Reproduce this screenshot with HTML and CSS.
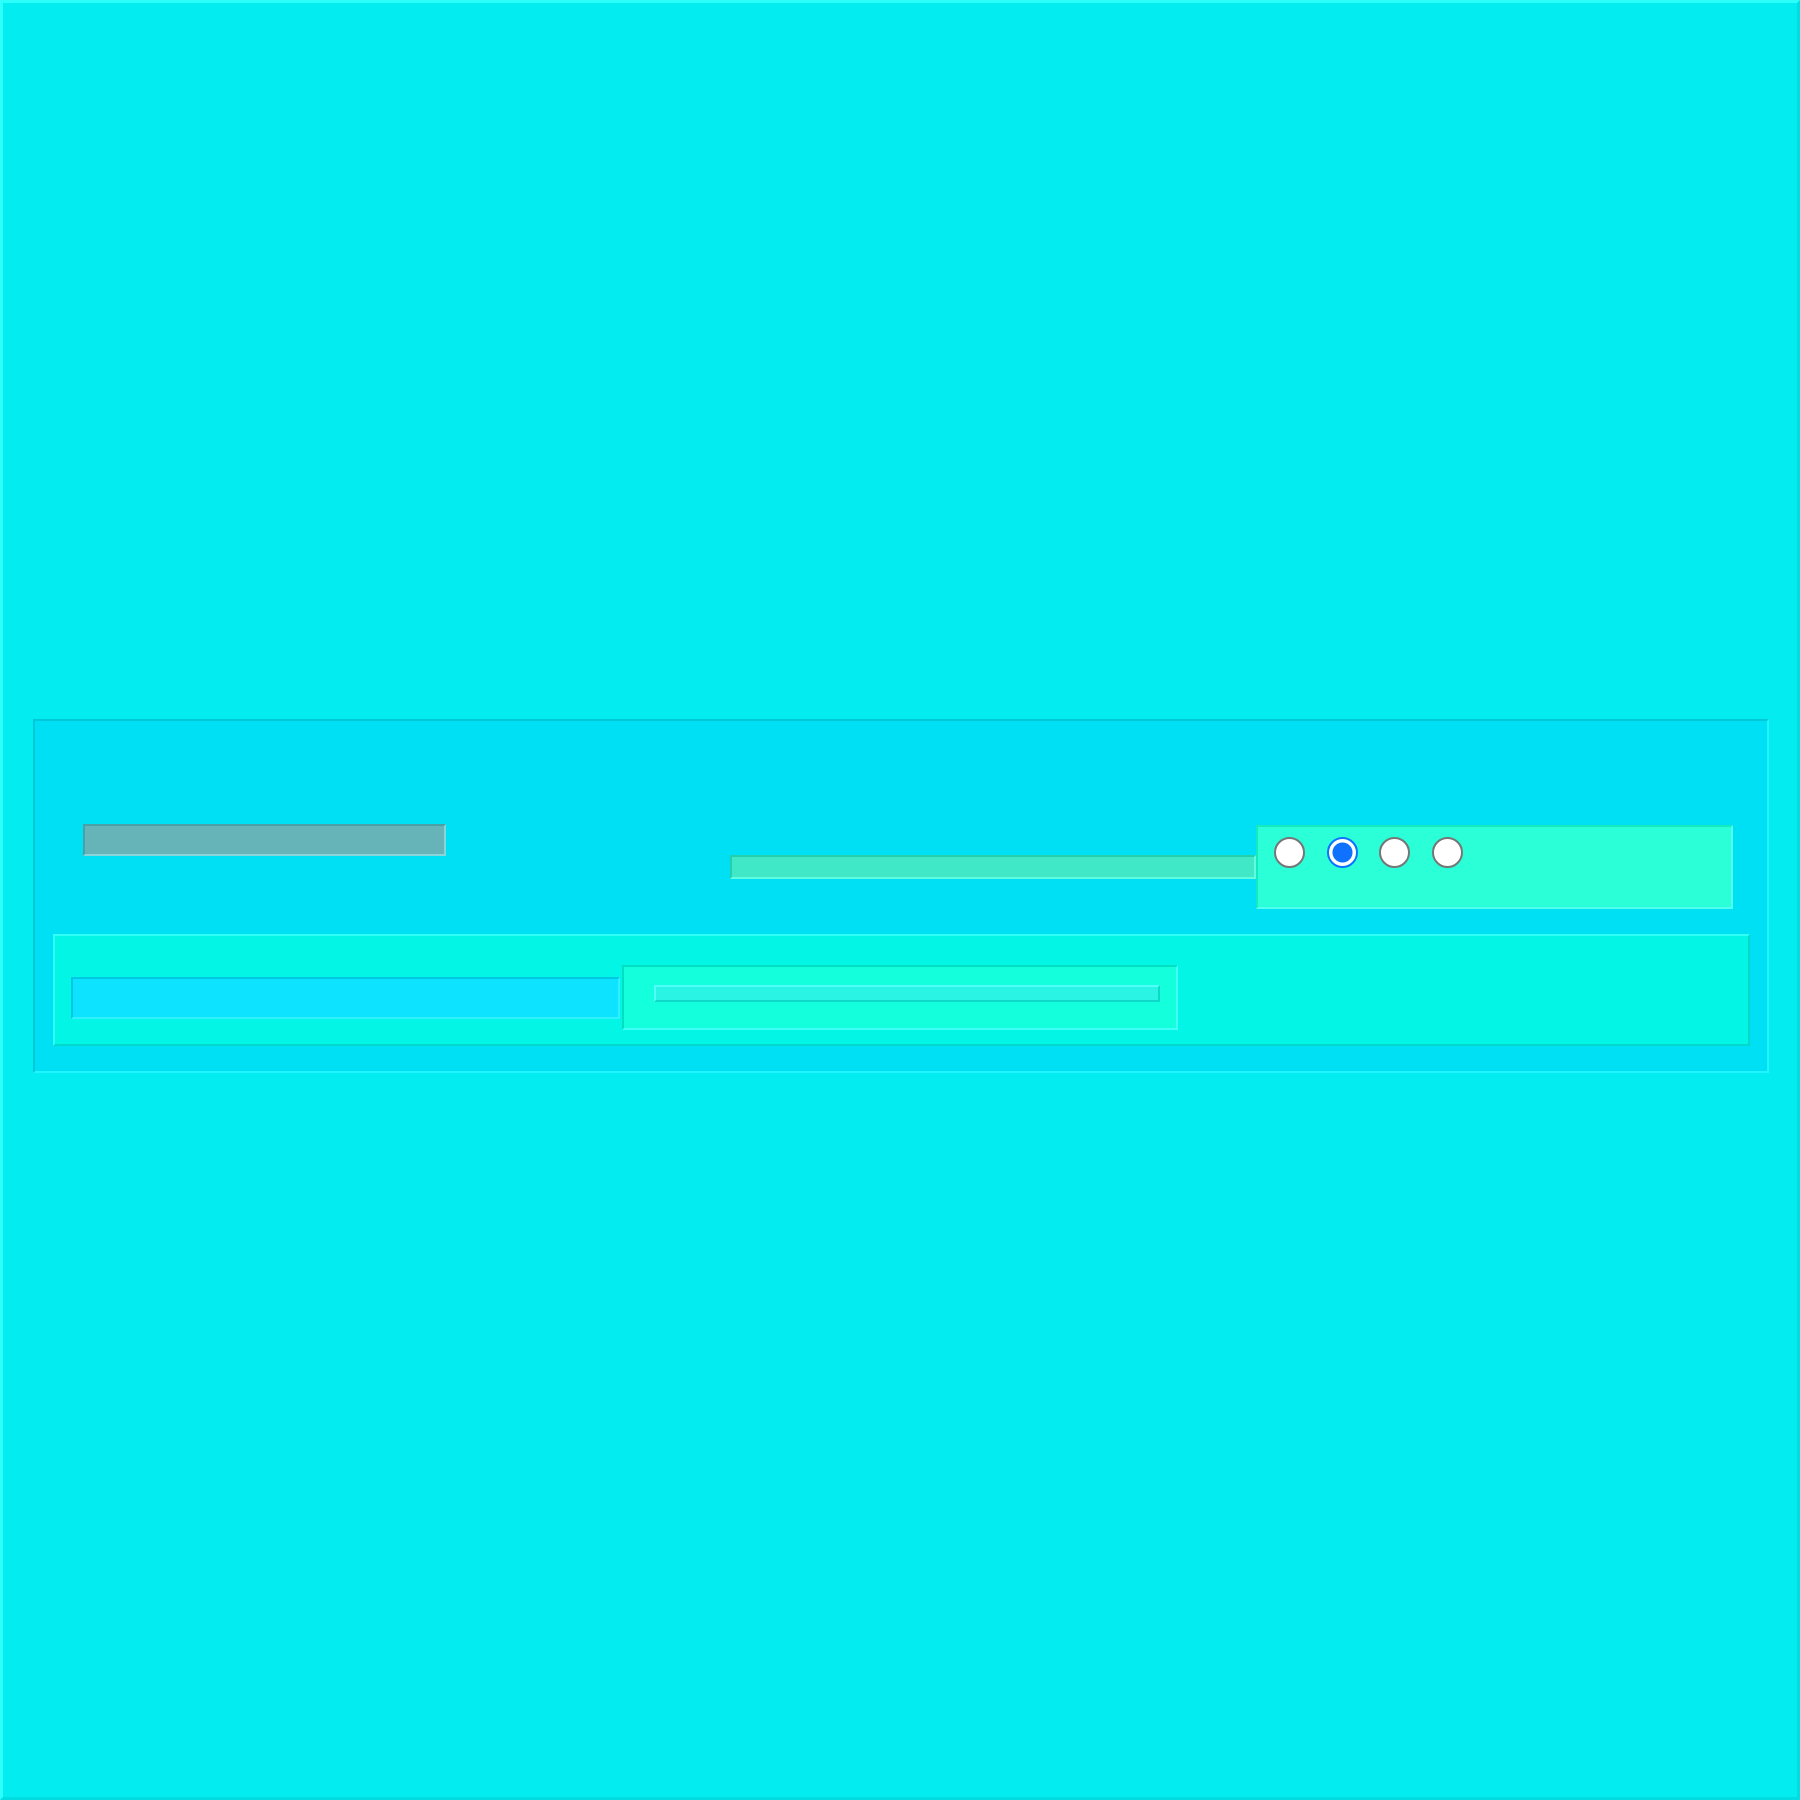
FILE: index.html
```html
<!DOCTYPE html>
<html>
<head>
<meta charset="utf-8">
<title>Panel</title>
<link rel="stylesheet" href="styles.css">
</head>
<body>
<div class="page">
  <div class="panel">
    <div class="top-row">
      <div class="gray-field"></div>
      <div class="right-group">
        <div class="green-bar"></div>
        <div class="radio-box">
          <input class="radio" type="radio" name="r">
          <input class="radio" type="radio" name="r" checked>
          <input class="radio" type="radio" name="r">
          <input class="radio" type="radio" name="r">
        </div>
      </div>
    </div>
    <div class="bottom-row">
      <div class="cyan-field"></div>
      <div class="green-box">
        <div class="inner-bar"></div>
      </div>
    </div>
  </div>
</div>
</body>
</html>
```
FILE: styles.css
```css
html, body {
  margin: 0;
  padding: 0;
}
body {
  width: 1800px;
  height: 1800px;
  font-family: "Liberation Sans", Arial, sans-serif;
}
.page {
  box-sizing: border-box;
  width: 1800px;
  height: 1800px;
  background: #03ecf0;
  border: 3px solid;
  border-color: #2cfffb #00dce0 #00dce0 #2cfffb;
  display: flex;
  flex-direction: column;
  justify-content: center;
  padding: 0 28px 0 30px;
}
.panel {
  box-sizing: border-box;
  height: 354px;
  background: #00e0f4;
  border: 2px solid;
  border-color: #00c8d8 #20f4ff #20f4ff #00c8d8;
  padding: 103px 17px 0 18px;
  display: flex;
  flex-direction: column;
  margin-top: -8px;
}
.top-row {
  display: flex;
  align-items: flex-start;
  justify-content: space-between;
  padding: 0 17px 0 30px;
}
.gray-field {
  box-sizing: border-box;
  width: 363px;
  height: 32px;
  background: #66b4b8;
  border: 2px solid;
  border-color: #4aa0a4 #88d4d8 #88d4d8 #4aa0a4;
}
.right-group {
  display: flex;
  align-items: center;
  margin-top: 1px;
}
.green-bar {
  box-sizing: border-box;
  width: 526px;
  height: 24px;
  background: #40e8c8;
  border: 2px solid;
  border-color: #22d0ae #60fce0 #60fce0 #22d0ae;
}
.radio-box {
  box-sizing: border-box;
  width: 477px;
  height: 84px;
  background: #2affd8;
  border: 2px solid;
  border-color: #16e8c0 #50fff0 #50fff0 #16e8c0;
  display: flex;
  align-items: flex-start;
  gap: 21.6px;
  padding: 10px 16px;
}
.radio {
  appearance: none;
  -webkit-appearance: none;
  box-sizing: border-box;
  margin: 0;
  width: 31px;
  height: 31px;
  border-radius: 50%;
  border: 2px solid #767676;
  background: #ffffff;
}
.radio:checked {
  border: 2px solid #0f72ff;
  background: radial-gradient(circle, #0f72ff 0 9.5px, #ffffff 10.5px);
}
.bottom-row {
  box-sizing: border-box;
  margin-top: 25px;
  height: 112px;
  background: #03f5e5;
  border: 2px solid;
  border-color: #30fff8 #00d8cc #00d8cc #30fff8;
  display: flex;
  align-items: center;
  padding: 29px 16px 14px;
}
.cyan-field {
  box-sizing: border-box;
  width: 549px;
  height: 42px;
  background: #0de2ff;
  border: 2px solid;
  border-color: #00c8e0 #30f0ff #30f0ff #00c8e0;
  margin-right: 2px;
}
.green-box {
  box-sizing: border-box;
  width: 556px;
  height: 65px;
  background: #14ffdc;
  border: 2px solid;
  border-color: #00e0c0 #40fff8 #40fff8 #00e0c0;
  padding: 18px 16px 0 30px;
}
.inner-bar {
  box-sizing: border-box;
  height: 17px;
  background: #2af5e5;
  border: 2px solid;
  border-color: #50fff8 #10d8c8 #10d8c8 #50fff8;
}
```
